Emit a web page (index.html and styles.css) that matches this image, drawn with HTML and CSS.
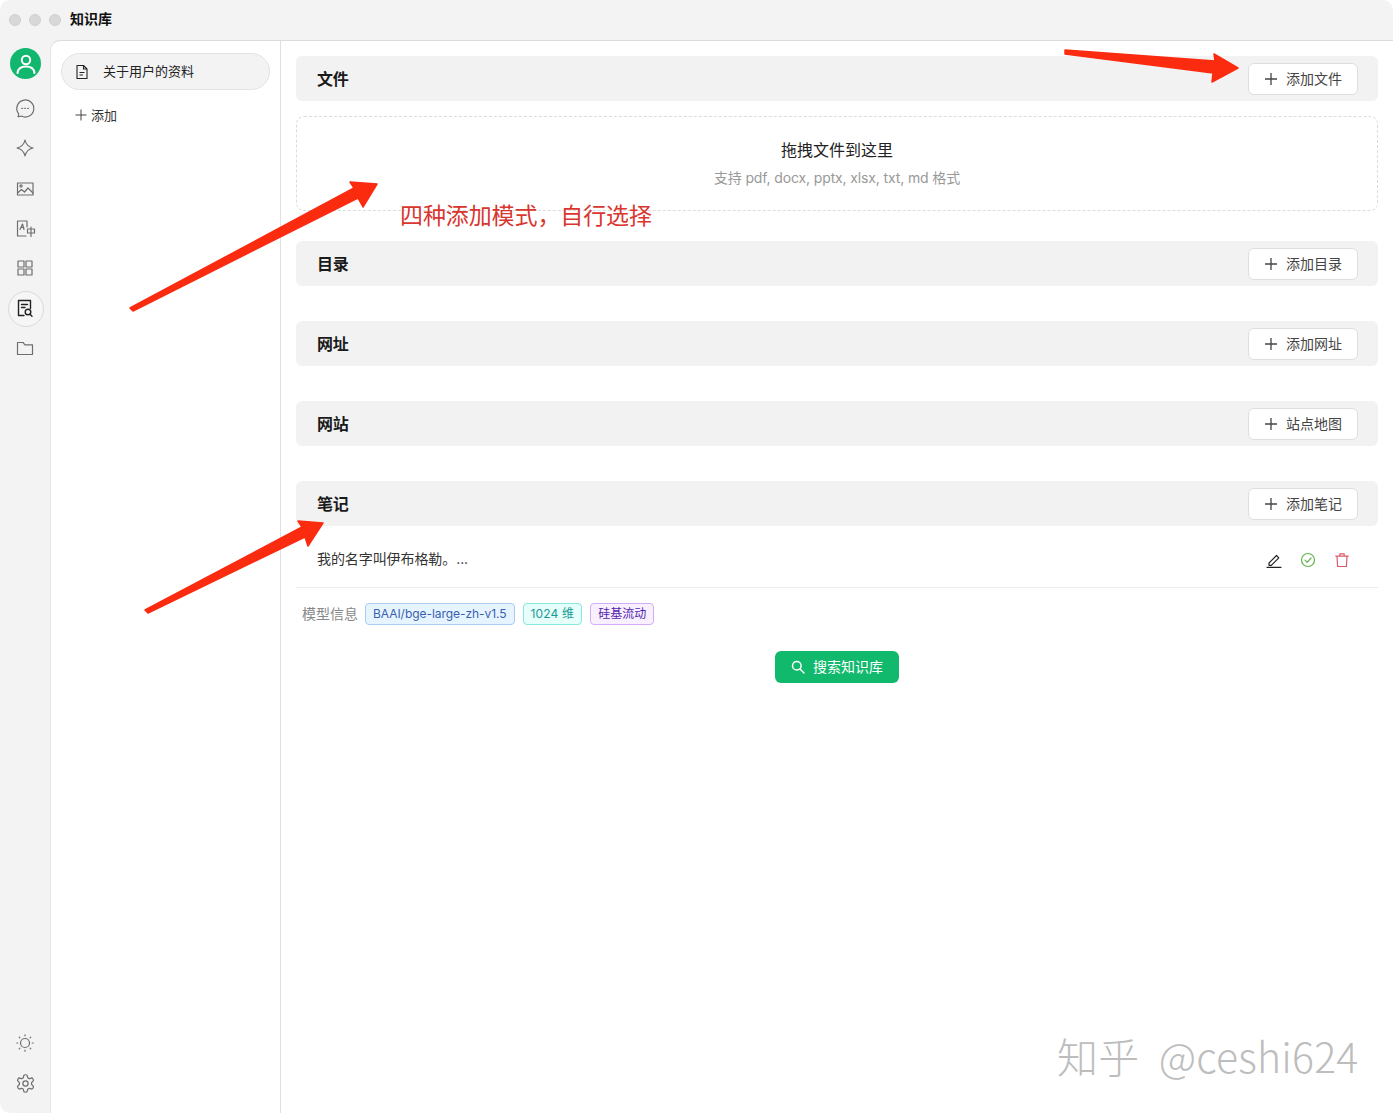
FILE: index.html
```html
<!DOCTYPE html>
<html lang="zh">
<head>
<meta charset="utf-8">
<title>知识库</title>
<link rel="stylesheet" href="styles.css">
</head>
<body>
<div class="app">
  <header class="titlebar">
    <span class="light"></span><span class="light"></span><span class="light"></span>
    <span class="app-title">知识库</span>
  </header>
  <div class="workspace">
    <nav class="rail">
      <div class="avatar">
        <svg width="24" height="24" viewBox="0 0 24 24" fill="none" stroke="#fff" stroke-width="2" stroke-linecap="round"><circle cx="12" cy="8" r="4.200"/><path d="M3.500 21c.6-4.600 3.800-6.400 8.500-6.400s7.900 1.800 8.500 6.400"/></svg>
      </div>
      <a class="rail-item"><svg class="ic" viewBox="0 0 20 20"><path d="M3 18.600c.7-.9.900-1.900.5-3A8.500 8.500 0 1 1 6.300 18c-1.100.6-2.200.8-3.300.6z"/><path d="M6.800 10.300h.8M9.700 10.300h.8M12.600 10.300h.8"/></svg></a>
      <a class="rail-item"><svg class="ic" viewBox="0 0 20 20"><path d="M10 2c.9 4.300 3.400 7 8 8-4.600 1-7.100 3.700-8 8-.9-4.300-3.400-7-8-8 4.600-1 7.100-3.700 8-8z"/></svg></a>
      <a class="rail-item"><svg class="ic" viewBox="0 0 20 20"><rect x="2.500" y="5" width="15.500" height="12"/><circle cx="6" cy="8" r="1.100"/><path d="M2.500 15l4-3.500 3 2.500 3.500-4 5 5"/></svg></a>
      <a class="rail-item"><svg class="ic" viewBox="0 0 20 20"><path d="M11 18H2.500V3H12v6"/><path d="M5 11.500l2.500-5.500 1.500 5.500M5.800 9.500h3"/><path d="M12.500 11h7v4h-7zM16 9v9.500"/></svg></a>
      <a class="rail-item"><svg class="ic" viewBox="0 0 20 20"><rect x="3" y="3" width="6" height="6"/><rect x="11" y="3" width="6" height="6"/><rect x="3" y="11" width="6" height="6"/><rect x="11" y="11" width="6" height="6"/></svg></a>
      <a class="rail-item rail-active"><svg class="ic ic-dark" viewBox="0 0 20 20"><path d="M9 17.500H3.500v-15h12v8"/><path d="M6.500 6.500h6M6.500 9.500h3.500"/><circle cx="13" cy="14" r="2.800"/><path d="M15 16.200l2 2"/></svg></a>
      <a class="rail-item"><svg class="ic" viewBox="0 0 20 20"><path d="M2.500 16.500v-12h5.500l2 2.300h7.500v9.700z"/></svg></a>
      <a class="rail-item rail-push"><svg class="ic" viewBox="0 0 20 20"><circle cx="10" cy="10" r="4.500"/><path d="M10 1.800v1M10 17.200v1M1.800 10h1M17.200 10h1M4.200 4.200l.7.700M15.100 15.100l.7.700M4.200 15.800l.7-.7M15.100 4.900l.7-.7"/></svg></a>
      <a class="rail-item"><svg class="ic ic-gear" viewBox="0 0 24 24"><path d="M12.220 2h-.44a2 2 0 0 0-2 2v.18a2 2 0 0 1-1 1.730l-.43.250a2 2 0 0 1-2 0l-.15-.08a2 2 0 0 0-2.730.730l-.22.380a2 2 0 0 0 .730 2.730l.15.100a2 2 0 0 1 1 1.720v.510a2 2 0 0 1-1 1.740l-.15.090a2 2 0 0 0-.730 2.730l.22.380a2 2 0 0 0 2.730.730l.15-.08a2 2 0 0 1 2 0l.43.250a2 2 0 0 1 1 1.730V20a2 2 0 0 0 2 2h.44a2 2 0 0 0 2-2v-.18a2 2 0 0 1 1-1.730l.43-.25a2 2 0 0 1 2 0l.15.08a2 2 0 0 0 2.730-.73l.22-.39a2 2 0 0 0-.73-2.730l-.15-.08a2 2 0 0 1-1-1.740v-.5a2 2 0 0 1 1-1.740l.15-.09a2 2 0 0 0 .73-2.730l-.22-.38a2 2 0 0 0-2.730-.73l-.15.08a2 2 0 0 1-2 0l-.43-.25a2 2 0 0 1-1-1.730V4a2 2 0 0 0-2-2z"/><circle cx="12" cy="12" r="3"/></svg></a>
    </nav>
    <div class="panel">
      <aside class="base-list">
        <div class="base-item">
          <svg class="base-icon" viewBox="0 0 16 16"><path d="M3 1.500h6.500l3.500 3.500v9.500H3z"/><path d="M9.500 1.500V5H13M5.500 8.500h5M5.500 11h3.500"/></svg>
          <span class="lift">关于用户的资料</span>
        </div>
        <div class="base-add">
          <svg class="plus-sm" viewBox="0 0 12 12"><path d="M6 .5v11M.5 6h11"/></svg>
          <span class="lift">添加</span>
        </div>
      </aside>
      <main class="content">
        <section class="section section-file">
          <div class="section-head"><h2>文件</h2>
            <button class="btn"><svg class="plus" viewBox="0 0 14 14"><path d="M7 1v12M1 7h12"/></svg><span class="lift">添加文件</span></button></div>
          <div class="dropzone">
            <p class="drop-title">拖拽文件到这里</p>
            <p class="drop-sub">支持 pdf, docx, pptx, xlsx, txt, md 格式</p>
          </div>
        </section>
        <section class="section">
          <div class="section-head"><h2>目录</h2>
            <button class="btn"><svg class="plus" viewBox="0 0 14 14"><path d="M7 1v12M1 7h12"/></svg><span class="lift">添加目录</span></button></div>
        </section>
        <section class="section">
          <div class="section-head"><h2>网址</h2>
            <button class="btn"><svg class="plus" viewBox="0 0 14 14"><path d="M7 1v12M1 7h12"/></svg><span class="lift">添加网址</span></button></div>
        </section>
        <section class="section">
          <div class="section-head"><h2>网站</h2>
            <button class="btn"><svg class="plus" viewBox="0 0 14 14"><path d="M7 1v12M1 7h12"/></svg><span class="lift">站点地图</span></button></div>
        </section>
        <section class="section section-note">
          <div class="section-head"><h2>笔记</h2>
            <button class="btn"><svg class="plus" viewBox="0 0 14 14"><path d="M7 1v12M1 7h12"/></svg><span class="lift">添加笔记</span></button></div>
          <div class="note-row">
            <span class="note-text">我的名字叫伊布格勒。...</span>
            <div class="note-actions">
              <svg class="act act-edit" viewBox="0 0 16 16"><path d="M3 11l7.500-7.500 2.300 2.300L5.300 13.300H3zM1 15.300h14"/></svg>
              <svg class="act act-ok" viewBox="0 0 16 16"><circle cx="8" cy="8" r="6.500"/><path d="M5 8.200l2.200 2.200L11 6"/></svg>
              <svg class="act act-del" viewBox="0 0 16 16"><path d="M3 4.200l.6 10.300h8.800l.6-10.300M1.800 4.200h12.400M5.800 4V1.800h4.400V4"/></svg>
            </div>
          </div>
        </section>
        <div class="model-info">
          <span class="model-label lift">模型信息</span>
          <span class="tag tag-blue">BAAI/bge-large-zh-v1.5</span>
          <span class="tag tag-cyan">1024 维</span>
          <span class="tag tag-purple">硅基流动</span>
        </div>
        <div class="search-wrap">
          <button class="btn-primary"><svg class="search" viewBox="0 0 14 14"><circle cx="5.800" cy="5.800" r="4.300"/><path d="M9 9l4 4"/></svg><span class="lift">搜索知识库</span></button>
        </div>
      </main>
    </div>
  </div>
</div>
<svg class="arrows" width="1393" height="1113" viewBox="0 0 1393 1113">
  <polygon points="1065,50 1215,61 1214,54 1238,68 1212,82 1213,73 1065,54"/>
  <polygon points="130,308 354,188 350,182 377,184 363,207 358,198 133,311"/>
  <polygon points="145,610 302,527 298,521 323,523 308,546 305,537 148,613"/>
</svg>
<div class="note-red">四种添加模式，自行选择</div>
<div class="watermark">知乎 @ceshi624</div>
</body>
</html>
```

FILE: styles.css
```css
* { box-sizing: border-box; }
html, body { margin: 0; padding: 0; height: 100%; background: #fff; }
body {
  width: 1393px; height: 1113px; overflow: hidden; position: relative;
  font-family: Inter, "Noto Sans CJK SC", "Liberation Sans", sans-serif;
  color: #222;
}
.lift { padding-bottom: 2px; }
.app { height: 100%; display: flex; flex-direction: column; background: #f3f3f3; border-radius: 10px; overflow: hidden; }
.titlebar { height: 40px; flex: none; display: flex; align-items: center; padding-left: 9px; gap: 8px; }
.light { width: 12px; height: 12px; border-radius: 50%; background: #d8d8d8; border: 1px solid #cfcfcf; }
.app-title { font-size: 14px; font-weight: 600; color: #111; margin-left: 1px; padding-bottom: 4px; }
.workspace { flex: 1; display: flex; min-height: 0; }
.rail { width: 50px; flex: none; display: flex; flex-direction: column; align-items: center; padding: 8px 0 10px; }
.avatar { width: 31px; height: 31px; border-radius: 50%; background: #12b76f; display: flex; align-items: center; justify-content: center; margin: 0 0 9px 1px; }
.rail-item { width: 40px; height: 40px; display: flex; align-items: center; justify-content: center; flex: none; position: relative; }
.rail-active::before { content: ""; position: absolute; left: 3px; top: 3px; width: 34px; height: 34px; border: 1px solid #d9d9d9; border-radius: 50%; background: #f6f6f6; }
.rail-push { margin-top: auto; }
.ic { width: 20px; height: 20px; fill: none; stroke: #6e6e6e; stroke-width: 1.200; position: relative; stroke-linecap: round; stroke-linejoin: round; overflow: visible; }
.ic-dark { stroke: #222; stroke-width: 1.400; }
.ic-gear { width: 21px; height: 21px; stroke-width: 1.400; }
.panel { flex: 1; min-width: 0; display: flex; background: #fff; border-top: 1px solid #dcdcdc; border-left: 1px solid #e4e4e4; border-top-left-radius: 10px; }
.base-list { width: 230px; flex: none; border-right: 1px solid #e0e0e0; padding: 12px 10px; }
.base-item { height: 37px; border-radius: 19px; background: #f3f3f3; border: 1px solid #e2e2e2; display: flex; align-items: center; padding-left: 12px; gap: 13px; font-size: 13px; color: #222; }
.base-icon { width: 16px; height: 16px; fill: none; stroke: #222; stroke-width: 1.100; stroke-linejoin: round; }
.base-add { display: flex; align-items: center; gap: 4px; font-size: 13px; color: #333; margin-top: 15px; padding-left: 14px; height: 20px; }
.plus-sm { width: 12px; height: 12px; fill: none; stroke: #444; stroke-width: 1; }
.content { flex: 1; min-width: 0; padding: 15px 15px 0; }
.section { margin-bottom: 35px; }
.section-file { margin-bottom: 30px; }
.section-note { margin-bottom: 15px; }
.section-head { height: 45px; background: #f2f2f2; border-radius: 6px; display: flex; align-items: center; justify-content: space-between; padding: 0 20px 0 21px; }
.section-head h2 { margin: 0; padding-bottom: 2px; font-size: 16px; font-weight: 600; color: #1a1a1a; letter-spacing: -0.2px; }
.btn { height: 32px; width: 110px; background: #fff; border: 1px solid #dedede; border-radius: 6px; display: flex; align-items: center; justify-content: center; gap: 8px; font: inherit; font-size: 14px; color: #444; padding: 0; }
.plus { width: 14px; height: 14px; fill: none; stroke: #444; stroke-width: 1.300; }
.dropzone { margin-top: 15px; height: 95px; border: 1px dashed #dcdcdc; border-radius: 8px; text-align: center; padding-top: 22px; }
.drop-title { margin: 0; font-size: 16px; line-height: 22px; color: #222; }
.drop-sub { margin: 6px 0 0; font-size: 14px; line-height: 22px; color: #999; letter-spacing: -0.13px; }
.note-row { height: 62px; border-bottom: 1px solid #ececec; display: flex; align-items: center; justify-content: space-between; padding: 0 28px 0 21px; font-size: 14px; color: #333; }
.note-text { margin-top: 2px; letter-spacing: -0.08px; }
.note-actions { display: flex; align-items: center; gap: 18px; margin-top: 7px; }
.act { width: 16px; height: 16px; fill: none; stroke-width: 1.200; stroke-linecap: round; stroke-linejoin: round; }
.act-edit { stroke: #222; }
.act-ok { stroke: #62b34e; }
.act-del { stroke: #dc5a6b; }
.model-info { display: flex; align-items: center; gap: 8px; padding-left: 6px; height: 22px; }
.model-label { font-size: 14px; color: #888; margin-right: -1px; }
.tag { height: 22px; line-height: 20px; font-size: 12px; padding: 0 7px; border: 1px solid; border-radius: 4px; white-space: nowrap; }
.tag-blue { background: #e6f4ff; border-color: #a8cdf0; color: #3a5fb0; letter-spacing: -0.05px; }
.tag-cyan { background: #e6fffb; border-color: #87e8de; color: #1a9a96; letter-spacing: 0.15px; }
.tag-purple { background: #f9f0ff; border-color: #d3adf7; color: #531dab; }
.search-wrap { display: flex; justify-content: center; margin-top: 26px; }
.btn-primary { height: 32px; width: 124px; background: #10b96c; border: 0; border-radius: 6px; color: #fff; font: inherit; font-size: 14px; display: flex; align-items: center; justify-content: center; gap: 8px; padding: 0; }
.search { width: 14px; height: 14px; fill: none; stroke: #fff; stroke-width: 1.500; stroke-linecap: round; }
.arrows { position: absolute; left: 0; top: 0; pointer-events: none; }
.arrows polygon { fill: #fb2b10; stroke: #fb2b10; stroke-width: 1.500; stroke-linejoin: round; }
.note-red { position: absolute; left: 400px; top: 200px; font-size: 23px; line-height: 32px; color: #d8362f; white-space: nowrap; letter-spacing: -0.1px; }
.watermark { position: absolute; left: 1057px; top: 1028px; font-size: 41px; line-height: 54px; color: #bdbdbd; white-space: nowrap; font-family: "Noto Sans CJK SC", sans-serif; font-weight: 300; word-spacing: 10px; letter-spacing: 0.2px; }
```
